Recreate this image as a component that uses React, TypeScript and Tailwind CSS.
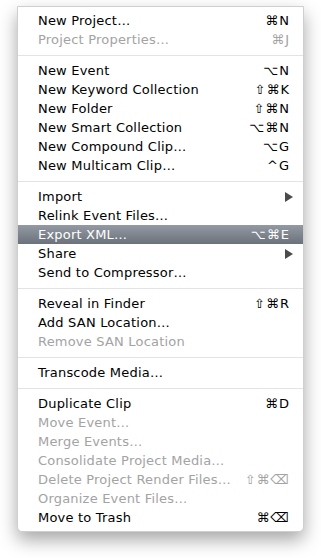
type Item =
  | { kind: 'sep' }
  | { kind: 'item'; label: string; keys?: string; disabled?: boolean; active?: boolean; submenu?: boolean }

const ITEMS: Item[] = [
  { kind: 'item', label: 'New Project…', keys: '⌘N' },
  { kind: 'item', label: 'Project Properties…', keys: '⌘J', disabled: true },
  { kind: 'sep' },
  { kind: 'item', label: 'New Event', keys: '⌥N' },
  { kind: 'item', label: 'New Keyword Collection', keys: '⇧⌘K' },
  { kind: 'item', label: 'New Folder', keys: '⇧⌘N' },
  { kind: 'item', label: 'New Smart Collection', keys: '⌥⌘N' },
  { kind: 'item', label: 'New Compound Clip…', keys: '⌥G' },
  { kind: 'item', label: 'New Multicam Clip…', keys: '^G' },
  { kind: 'sep' },
  { kind: 'item', label: 'Import', submenu: true },
  { kind: 'item', label: 'Relink Event Files…' },
  { kind: 'item', label: 'Export XML…', keys: '⌥⌘E', active: true },
  { kind: 'item', label: 'Share', submenu: true },
  { kind: 'item', label: 'Send to Compressor…' },
  { kind: 'sep' },
  { kind: 'item', label: 'Reveal in Finder', keys: '⇧⌘R' },
  { kind: 'item', label: 'Add SAN Location…' },
  { kind: 'item', label: 'Remove SAN Location', disabled: true },
  { kind: 'sep' },
  { kind: 'item', label: 'Transcode Media…' },
  { kind: 'sep' },
  { kind: 'item', label: 'Duplicate Clip', keys: '⌘D' },
  { kind: 'item', label: 'Move Event…', disabled: true },
  { kind: 'item', label: 'Merge Events…', disabled: true },
  { kind: 'item', label: 'Consolidate Project Media…', disabled: true },
  { kind: 'item', label: 'Delete Project Render Files…', keys: '⇧⌘⌫', disabled: true },
  { kind: 'item', label: 'Organize Event Files…', disabled: true },
  { kind: 'item', label: 'Move to Trash', keys: '⌘⌫' },
]

function SubmenuArrow({ active }: { active?: boolean }) {
  return (
    <svg width="8" height="10" viewBox="0 0 8 10" className="mr-[-3px]">
      <path d="M0 0 L8 5 L0 10 Z" fill={active ? '#ffffff' : '#4b4b4b'} />
    </svg>
  )
}

export default function App() {
  return (
    <div className="min-h-screen bg-white pt-[6px] pl-[17px]">
      <div
        className="w-[287px] rounded-b-[5px] border border-[#cfcfcf] bg-white py-[4px] shadow-[0_8px_18px_rgba(0,0,0,0.35)]"
        style={{ fontFamily: '"DejaVu Sans", "Liberation Sans", sans-serif' }}
      >
        {ITEMS.map((item, i) => {
          if (item.kind === 'sep') {
            return (
              <div key={i} className="flex h-[12px] items-center">
                <div className="h-px w-full bg-[#e3e3e3]" />
              </div>
            )
          }
          const color = item.active ? 'text-white' : item.disabled ? 'text-[#a3a3a3]' : 'text-black'
          return (
            <div
              key={i}
              className={`flex h-[19px] items-center justify-between pl-[20px] pr-[13px] text-[13px] leading-[19px] tracking-[0.2px] ${color} ${
                item.active ? 'bg-gradient-to-b from-[#939aa3] to-[#6b727c]' : ''
              }`}
            >
              <span>{item.label}</span>
              {item.keys && <span className="tracking-[1px]">{item.keys}</span>}
              {item.submenu && <SubmenuArrow active={item.active} />}
            </div>
          )
        })}
      </div>
    </div>
  )
}
